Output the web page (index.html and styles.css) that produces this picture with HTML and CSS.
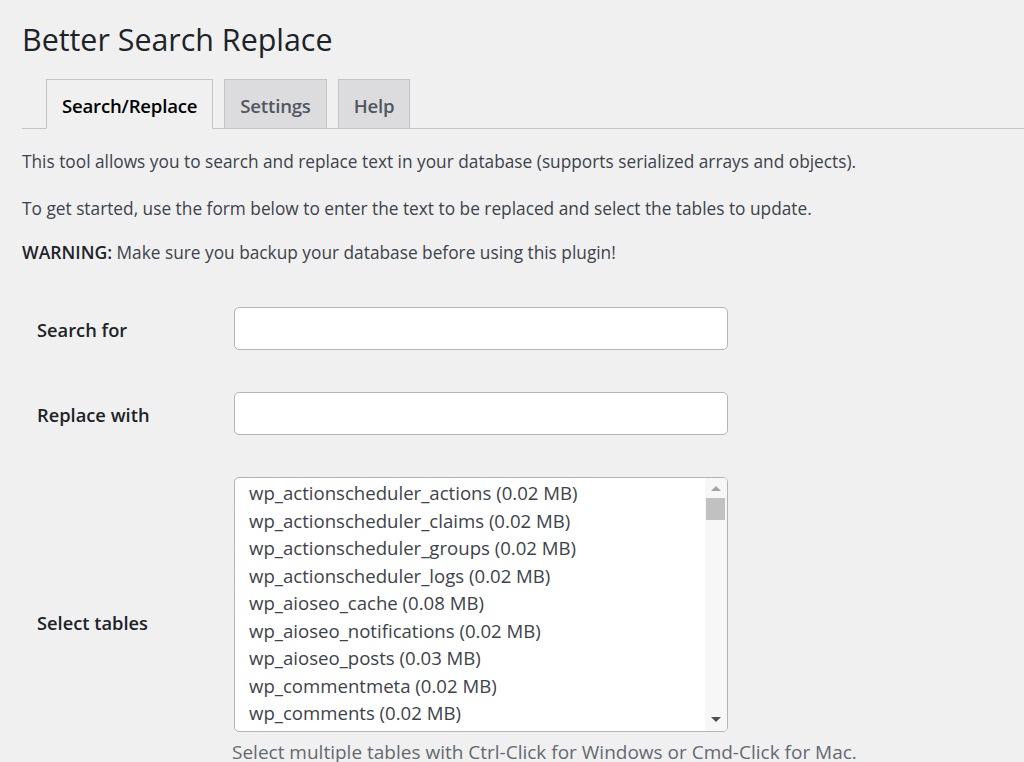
FILE: index.html
```html
<!DOCTYPE html>
<html lang="en">
<head>
<meta charset="utf-8">
<title>Better Search Replace</title>
<link rel="stylesheet" href="styles.css">
</head>
<body>
<div class="wrap">
  <h1 class="title">Better Search Replace</h1>
  <nav class="tabs">
    <a class="tab tab-active">Search/Replace</a>
    <a class="tab">Settings</a>
    <a class="tab">Help</a>
  </nav>
  <p class="intro">This tool allows you to search and replace text in your database (supports serialized arrays and objects).</p>
  <p class="intro">To get started, use the form below to enter the text to be replaced and select the tables to update.</p>
  <p class="intro"><strong>WARNING:</strong> Make sure you backup your database before using this plugin!</p>

  <div class="form">
    <div class="row row-input">
      <label class="label">Search for</label>
      <div class="field"><div class="input"></div></div>
    </div>
    <div class="row row-input">
      <label class="label">Replace with</label>
      <div class="field"><div class="input"></div></div>
    </div>
    <div class="row row-select">
      <label class="label label-mid">Select tables</label>
      <div class="field">
        <div class="select">
          <ul class="options">
            <li>wp_actionscheduler_actions (0.02 MB)</li>
            <li>wp_actionscheduler_claims (0.02 MB)</li>
            <li>wp_actionscheduler_groups (0.02 MB)</li>
            <li>wp_actionscheduler_logs (0.02 MB)</li>
            <li>wp_aioseo_cache (0.08 MB)</li>
            <li>wp_aioseo_notifications (0.02 MB)</li>
            <li>wp_aioseo_posts (0.03 MB)</li>
            <li>wp_commentmeta (0.02 MB)</li>
            <li>wp_comments (0.02 MB)</li>
          </ul>
          <div class="scrollbar">
            <span class="arrow arrow-up"></span>
            <span class="thumb"></span>
            <span class="track"></span>
            <span class="arrow arrow-down"></span>
          </div>
        </div>
        <p class="hint">Select multiple tables with Ctrl-Click for Windows or Cmd-Click for Mac.</p>
      </div>
    </div>
  </div>
</div>
</body>
</html>
```

FILE: styles.css
```css
* { box-sizing: border-box; }
html, body { margin: 0; padding: 0; }
body {
  background: #f0f0f1;
  font-family: "Open Sans", "Noto Sans", sans-serif;
  color: #3c434a;
  height: 762px;
  overflow: hidden;
}
.wrap {
  padding: 0 0 0 22px;
}
.title {
  margin: 0;
  padding-top: 18px;
  font-size: 30.4px;
  line-height: 44px;
  font-weight: 400;
  color: #1d2327;
}
.tabs {
  display: flex;
  gap: 11px;
  margin-top: 17px;
  padding-left: 24px;
  border-bottom: 1px solid #c3c4c7;
}
.tab {
  display: block;
  height: 49px;
  padding: 0 15px;
  line-height: 51px;
  font-size: 18.6px;
  font-weight: 600;
  color: #50575e;
  background: #dcdcde;
  border: 1px solid #c3c4c7;
  border-bottom: none;
  margin-bottom: -1px;
  letter-spacing: -0.2px;
}
.tab-active {
  background: #f0f0f1;
  color: #000;
  height: 50px;
  border-bottom: 1px solid #f0f0f1;
}
.intro {
  margin: 0;
  font-size: 17.3px;
  line-height: 24px;
}
.intro:nth-of-type(1) { margin-top: 21px; }
.intro:nth-of-type(2) { margin-top: 23px; }
.intro:nth-of-type(3) { margin-top: 20px; }
.intro strong { font-weight: 600; color: #1d2327; font-size: 17.6px; line-height: 1; }

.form {
  margin-top: 42px;
  padding-left: 15px;
}
.row {
  display: flex;
  align-items: center;
}
.row-input { height: 43px; margin-bottom: 42px; }
.row-select { align-items: flex-start; }
.label {
  width: 197px;
  flex: none;
  padding-top: 1px;
  font-size: 18.3px;
  font-weight: 600;
  color: #1d2327;
}
.label-mid { margin-top: 132px; }
.field { width: 494px; }
.input {
  width: 494px;
  height: 43px;
  background: #fff;
  border: 1px solid #b4b4b4;
  border-radius: 5px;
}
.select {
  display: flex;
  width: 494px;
  height: 255px;
  background: #fff;
  border: 1px solid #b4b4b4;
  border-radius: 5px;
  overflow: hidden;
}
.options {
  list-style: none;
  margin: 0;
  padding: 1px 0 0 14px;
  flex: 1;
}
.options li {
  font-size: 18.6px;
  line-height: 27.5px;
  color: #3c434a;
  white-space: nowrap;
}
.scrollbar {
  width: 22px;
  flex: none;
  background: #f7f7f7;
  display: flex;
  flex-direction: column;
  align-items: center;
  padding: 0 1px 0 0;
}
.arrow {
  width: 0;
  height: 0;
  border-left: 5px solid transparent;
  border-right: 5px solid transparent;
}
.arrow-up {
  margin-top: 8px;
  border-bottom: 5px solid #a3a3a3;
}
.arrow-down {
  margin-bottom: 9px;
  border-top: 5px solid #505050;
}
.thumb {
  margin-top: 7px;
  width: 19px;
  height: 22px;
  background: #c1c1c1;
}
.track { flex: 1; }
.hint {
  margin: 7px 0 0 -2px;
  font-size: 19px;
  line-height: 26px;
  color: #646970;
  white-space: nowrap;
}
```
